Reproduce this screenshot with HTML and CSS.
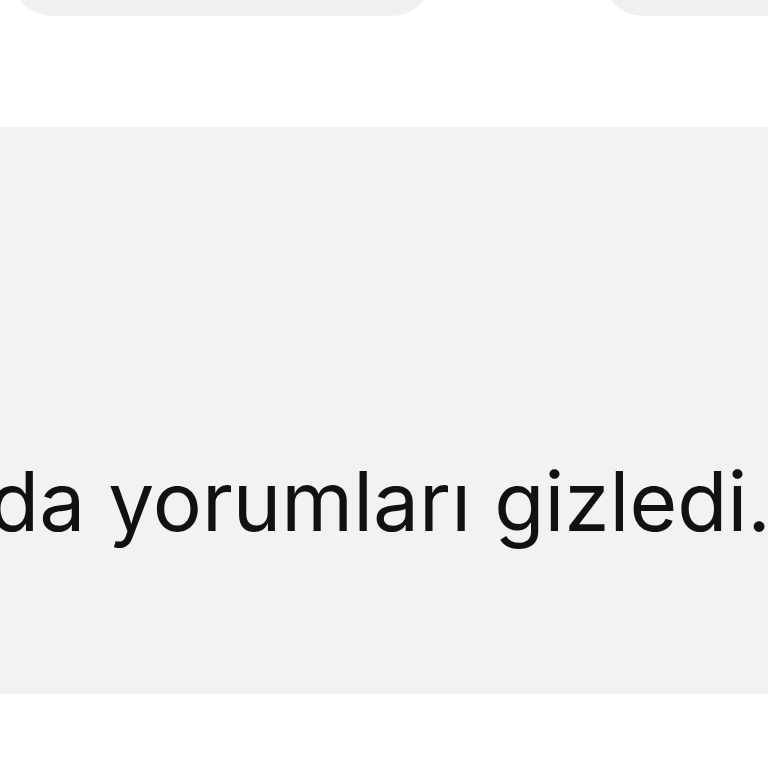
FILE: index.html
```html
<!DOCTYPE html>
<html lang="tr">
<head>
    <meta charset="UTF-8">
    <meta name="viewport" content="width=device-width, initial-scale=1.0">
    <title>Yorumlar</title>
    <link rel="stylesheet" href="styles.css">
</head>
<body>
    <div class="actions">
        <div class="pill pill-left"></div>
        <div class="pill pill-right"></div>
    </div>

    <div class="notice">
        <p class="notice-text">da yorumları gizledi.</p>
    </div>
</body>
</html>
```

FILE: styles.css
```css
html, body {
    margin: 0;
    padding: 0;
    background: #ffffff;
    overflow: hidden;
    height: 768px;
}
body {
    font-family: Inter, "Noto Sans", sans-serif;
}
.actions {
    display: flex;
    gap: 171px;
    padding-left: 12px;
    height: 127px;
}
.pill {
    background: #f0f0f0;
    height: 80px;
    margin-top: -64px;
    border-radius: 40px;
    flex-shrink: 0;
}
.pill-left {
    width: 420px;
}
.pill-right {
    width: 300px;
}
.notice {
    background: #f2f2f2;
    height: 567px;
    overflow: hidden;
}
.notice-text {
    margin: 0;
    padding-top: 325px;
    margin-left: -11px;
    font-size: 82px;
    line-height: 100px;
    color: #111111;
    white-space: nowrap;
}
```
